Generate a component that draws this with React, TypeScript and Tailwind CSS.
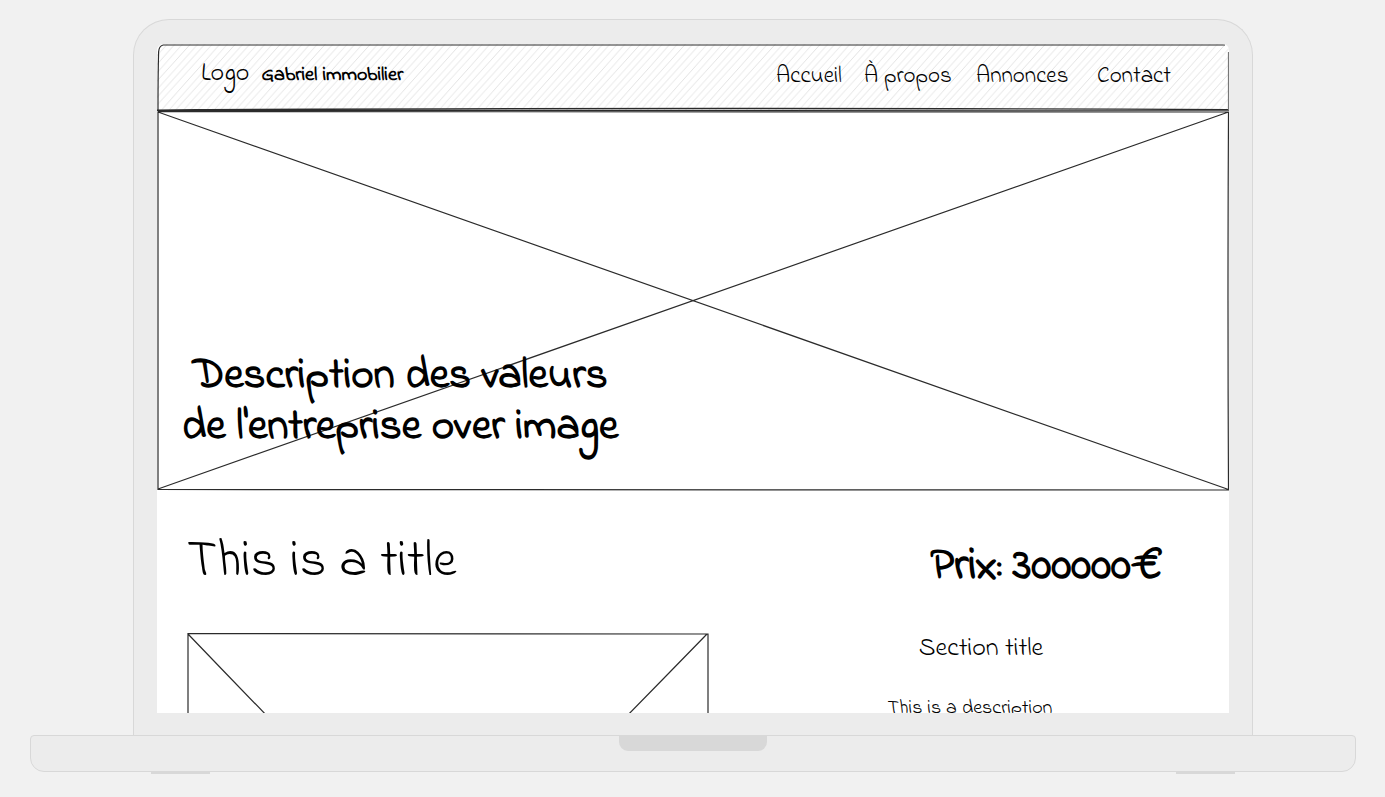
const line = {
  fill: "none",
  stroke: "#2b2b2b",
  strokeWidth: 1.2,
  vectorEffect: "non-scaling-stroke" as const,
};

function Hatching() {
  return (
    <svg aria-hidden="true" className="absolute inset-0 size-full">
      <defs>
        <pattern id="hatch" width="45" height="66" patternUnits="userSpaceOnUse" patternTransform="skewX(-42)">
          <path d="M3 0V66M18 0L19 66M33.5 0L33 66" stroke="#dcdcdc" strokeWidth="0.8" fill="none" />
          <path d="M10.5 0L10 66M25.5 0L26.5 66M41 0V66" stroke="#ececec" strokeWidth="1.3" fill="none" />
        </pattern>
      </defs>
      <rect width="100%" height="100%" rx="6" fill="url(#hatch)" />
    </svg>
  );
}

function HeaderOutline() {
  return (
    <svg aria-hidden="true" className="absolute inset-0 size-full overflow-visible" viewBox="0 0 1072 66" preserveAspectRatio="none">
      <path {...line} d="M6 1Q500 0.6 1068 1M6 1Q2 2 1.6 8Q1 30 1 66M0 66Q500 63 1072 65.5M0 66.5Q500 66.5 1072 66.2" />
      <path {...line} stroke="#777777" d="M1071.5 8V66" />
    </svg>
  );
}

function HeroPlaceholder() {
  return (
    <svg aria-hidden="true" className="absolute inset-0 size-full" viewBox="0 0 1072 381" preserveAspectRatio="none">
      <path {...line} d="M1 1.6Q500 3.4 1071.5 2Q1070.5 190 1071.5 380Q500 381.5 1 379.5Q1.6 190 1 2Q535 189 1071.5 379.5M1 379Q535 192 1071.5 2" />
    </svg>
  );
}

function PhotoPlaceholder() {
  return (
    <svg aria-hidden="true" className="block h-[522px] w-full" viewBox="0 0 522 522" preserveAspectRatio="none">
      <path {...line} d="M1 0.6Q300 0.5 521 1Q522 260 521 521H1V1Q255 266 521 521M1 521Q268 260 520 1" />
    </svg>
  );
}

export default function App() {
  return (
    <div className="flex h-screen min-h-[480px] flex-col overflow-hidden bg-[#f1f1f1] pt-[19px] pr-[29px] pb-[23px] pl-[30px] font-['Indie_Flower',Lato,sans-serif] text-black">
      <div className="mx-[103px] flex min-h-0 flex-1 flex-col rounded-t-[36px] border border-b-0 border-[#d8d8d8] bg-[#ececec] px-[23px] pt-6 pb-[22px]">
        <div className="min-h-0 flex-1 overflow-hidden rounded-t-md bg-white">
          <header className="relative flex h-[66px] items-center justify-between pr-[61px] pl-11">
            <Hatching />
            <HeaderOutline />
            <a href="#" className="relative flex items-baseline gap-3 pb-1.5">
              <span className="text-[26px]">Logo</span>
              <span className="text-xl font-bold">Gabriel immobilier</span>
            </a>
            <nav className="relative grid grid-cols-[88px_112px_121px_71px] text-[23px]">
              <a href="#accueil">Accueil</a>
              <a href="#a-propos">À propos</a>
              <a href="#annonces">Annonces</a>
              <a href="#contact">Contact</a>
            </nav>
          </header>

          <section className="relative flex h-[381px] items-end px-[25px] pb-[38px]">
            <HeroPlaceholder />
            <h1 className="relative text-center text-[43px] leading-[51px] font-bold">
              Description des valeurs
              <br />
              de l'entreprise over image
            </h1>
          </section>

          <main className="px-[30px] pt-[42px]">
            <div className="flex items-center justify-between pr-9">
              <h2 className="text-[52px] leading-[60px]">This is a title</h2>
              <p className="pt-2 text-[46px] leading-[52px] font-bold">Prix: 300000€</p>
            </div>
            <div className="mt-10 flex justify-between">
              <div className="w-[522px]">
                <PhotoPlaceholder />
              </div>
              <div className="flex w-[436px] flex-col items-center pt-[2px]">
                <h3 className="text-[26px] leading-7">Section title</h3>
                <p className="mt-8 mr-[22px] text-xl leading-7">This is a description</p>
              </div>
            </div>
          </main>
        </div>
      </div>

      <div className="relative flex h-[37px] shrink-0 justify-center rounded-t-[4px] rounded-b-[14px] border border-[#d8d8d8] bg-[#ececec]">
        <div className="h-[15px] w-[148px] rounded-b-[9px] bg-[#d8d8d8]" />
      </div>
      <div className="flex shrink-0 justify-between px-[121px]">
        <div className="h-[2px] w-[59px] bg-[#d8d8d8]" />
        <div className="h-[2px] w-[59px] bg-[#d8d8d8]" />
      </div>
    </div>
  );
}
